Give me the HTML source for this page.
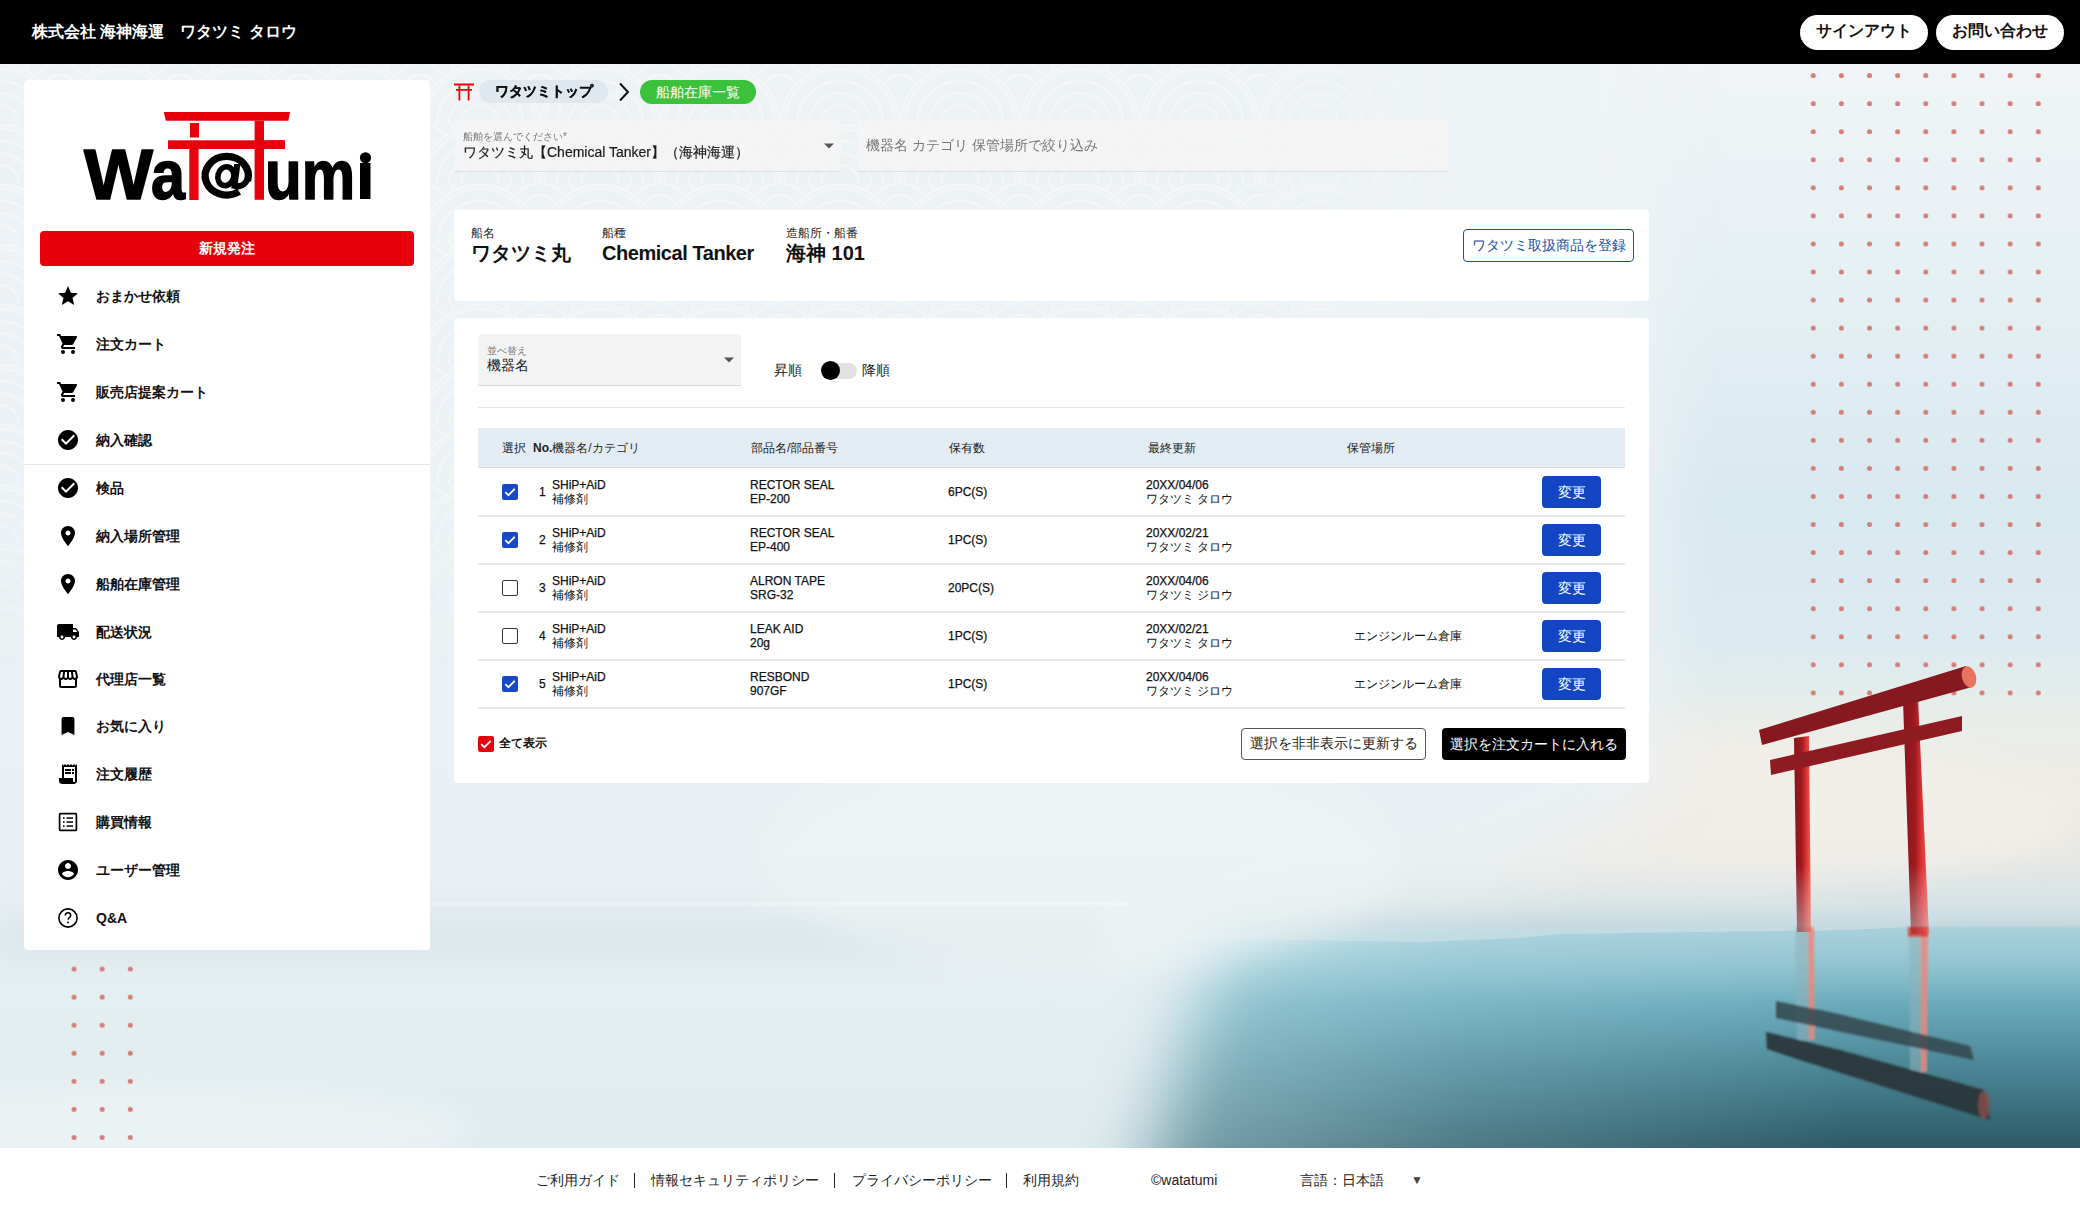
<!DOCTYPE html>
<html lang="ja"><head><meta charset="utf-8">
<style>
*{box-sizing:border-box;margin:0;padding:0}
html,body{width:2080px;height:1212px;overflow:hidden}
body{position:relative;font-family:"Liberation Sans",sans-serif;color:#111;background:#eef3f6}
.a{position:absolute;white-space:nowrap}
#bg{position:absolute;left:0;top:64px;width:2080px;height:1084px;overflow:hidden}
#hdr{position:absolute;left:0;top:0;width:2080px;height:64px;background:#000}
.pill{position:absolute;top:15px;height:35px;width:128px;background:#fff;border-radius:18px;font-weight:bold;font-size:16px;line-height:32px;text-align:center;color:#111}
.panel{position:absolute;background:#fff;border-radius:4px}
.mi{position:absolute;left:96px;font-weight:bold;font-size:14px;line-height:20px}
.ic{position:absolute;left:56px;width:24px;height:24px}
#foot{position:absolute;left:0;top:1148px;width:2080px;height:64px;background:#fff}
.ft{position:absolute;top:1171px;font-size:14px;line-height:18px;color:#222}
.sep{position:absolute;top:1173px;width:1px;height:15px;background:#222}
.cell{position:absolute;font-size:12px;line-height:14px;color:#111;-webkit-text-stroke:0.25px #111}
.chk{position:absolute;width:16px;height:16px;border-radius:2px}
.chk.on{background:#1848c8}
.chk.off{border:1.6px solid #333;background:#fff}
.btnb{position:absolute;left:1542px;width:59px;height:32px;background:#1446c4;border-radius:4px;color:#fff;font-size:14px;line-height:32px;text-align:center}
.rowline{position:absolute;left:478px;width:1147px;height:2px;background:#e8eaec}
</style></head><body>
<div id="bg"><svg width="2080" height="1084" viewBox="0 64 2080 1084" style="position:absolute;left:0;top:0">
<defs>
 <linearGradient id="sky" x1="0" y1="64" x2="0" y2="940" gradientUnits="userSpaceOnUse">
  <stop offset="0" stop-color="#f0f4f6"/>
  <stop offset="0.25" stop-color="#e6f0f4"/>
  <stop offset="0.5" stop-color="#d9e9f0"/>
  <stop offset="0.66" stop-color="#dcebf0"/>
  <stop offset="0.75" stop-color="#e9ede9"/>
  <stop offset="0.84" stop-color="#efebe5"/>
  <stop offset="0.92" stop-color="#e6e7e3"/>
  <stop offset="0.97" stop-color="#d5e1e2"/>
  <stop offset="1" stop-color="#c9dde1"/>
 </linearGradient>
 <linearGradient id="sea" x1="0" y1="915" x2="0" y2="1148" gradientUnits="userSpaceOnUse">
  <stop offset="0" stop-color="#a6d0da"/>
  <stop offset="0.2" stop-color="#86c0cf"/>
  <stop offset="0.4" stop-color="#69a8b9"/>
  <stop offset="0.65" stop-color="#4b8696"/>
  <stop offset="1" stop-color="#2c5a66"/>
 </linearGradient>
 <linearGradient id="haze" x1="0" y1="850" x2="0" y2="1000" gradientUnits="userSpaceOnUse">
  <stop offset="0" stop-color="#dfe8ea" stop-opacity="0"/>
  <stop offset="0.35" stop-color="#d6e3e6" stop-opacity="0.7"/>
  <stop offset="0.5" stop-color="#c5dadf" stop-opacity="0.95"/>
  <stop offset="0.53" stop-color="#b9d6dd" stop-opacity="0.4"/>
  <stop offset="1" stop-color="#c8dde2" stop-opacity="0"/>
 </linearGradient>
 <linearGradient id="seafade" x1="1150" y1="0" x2="1850" y2="0" gradientUnits="userSpaceOnUse">
  <stop offset="0" stop-color="#c0e2ea" stop-opacity="0.55"/>
  <stop offset="0.45" stop-color="#b0dae4" stop-opacity="0.25"/>
  <stop offset="1" stop-color="#b0dae4" stop-opacity="0"/>
 </linearGradient>
 <linearGradient id="mistc" x1="0" y1="64" x2="0" y2="1148" gradientUnits="userSpaceOnUse">
  <stop offset="0" stop-color="#eef3f6"/>
  <stop offset="0.4" stop-color="#ecf2f5"/>
  <stop offset="0.65" stop-color="#eaf1f4"/>
  <stop offset="0.85" stop-color="#e5eef1"/>
  <stop offset="1" stop-color="#e1ecef"/>
 </linearGradient>
 <filter id="bl1" x="-10%" y="-10%" width="120%" height="120%"><feGaussianBlur stdDeviation="0.8"/></filter>
 <filter id="bl2" x="-50%" y="-200%" width="200%" height="500%"><feGaussianBlur stdDeviation="14"/></filter>
 <filter id="bl" x="-20%" y="-20%" width="140%" height="140%"><feGaussianBlur stdDeviation="35"/></filter>
 <mask id="mm" maskUnits="userSpaceOnUse" x="0" y="64" width="2080" height="1084">
  <path d="M-200 -100 L1660 -100 L1660 800 L1500 880 L1230 935 L1195 1000 L1120 1250 L-200 1250 Z" fill="#fff" filter="url(#bl)"/>
 </mask>
 <pattern id="dp" x="1799.2" y="61.5" width="28.13" height="28.06" patternUnits="userSpaceOnUse"><circle cx="14.06" cy="14.03" r="2.5" fill="#d27f7c"/></pattern>
 <pattern id="dp2" x="60" y="955" width="28.13" height="28.06" patternUnits="userSpaceOnUse"><circle cx="14.06" cy="14.03" r="2.5" fill="#d27f7c"/></pattern>
 <linearGradient id="pilL" x1="0" y1="0" x2="1" y2="0">
  <stop offset="0" stop-color="#8a141b"/><stop offset="0.45" stop-color="#9c1a20"/><stop offset="0.7" stop-color="#d83033"/><stop offset="1" stop-color="#f4604f"/>
 </linearGradient>
 <linearGradient id="refl" x1="0" y1="925" x2="0" y2="1080" gradientUnits="userSpaceOnUse">
  <stop offset="0" stop-color="#d8575a" stop-opacity="0.85"/><stop offset="0.6" stop-color="#c87a7a" stop-opacity="0.5"/><stop offset="1" stop-color="#a06060" stop-opacity="0.2"/>
 </linearGradient>
 <pattern id="sg" x="0" y="64" width="120" height="60" patternUnits="userSpaceOnUse"><g stroke="#ffffff" stroke-width="3" fill="none"><circle cx="0" cy="0" r="59" fill="#eaf0f3"/><circle cx="0" cy="0" r="55"/><circle cx="0" cy="0" r="43"/><circle cx="0" cy="0" r="31"/><circle cx="0" cy="0" r="19"/><circle cx="120" cy="0" r="59" fill="#eaf0f3"/><circle cx="120" cy="0" r="55"/><circle cx="120" cy="0" r="43"/><circle cx="120" cy="0" r="31"/><circle cx="120" cy="0" r="19"/><circle cx="60" cy="30.0" r="59" fill="#eaf0f3"/><circle cx="60" cy="30.0" r="55"/><circle cx="60" cy="30.0" r="43"/><circle cx="60" cy="30.0" r="31"/><circle cx="60" cy="30.0" r="19"/><circle cx="0" cy="60" r="59" fill="#eaf0f3"/><circle cx="0" cy="60" r="55"/><circle cx="0" cy="60" r="43"/><circle cx="0" cy="60" r="31"/><circle cx="0" cy="60" r="19"/><circle cx="120" cy="60" r="59" fill="#eaf0f3"/><circle cx="120" cy="60" r="55"/><circle cx="120" cy="60" r="43"/><circle cx="120" cy="60" r="31"/><circle cx="120" cy="60" r="19"/></g></pattern>
 <linearGradient id="sgm" x1="0" y1="64" x2="0" y2="700" gradientUnits="userSpaceOnUse">
  <stop offset="0" stop-color="#fff" stop-opacity="0.3"/><stop offset="0.6" stop-color="#fff" stop-opacity="0.28"/><stop offset="1" stop-color="#fff" stop-opacity="0"/>
 </linearGradient>
 <mask id="sgmask" maskUnits="userSpaceOnUse" x="0" y="64" width="2080" height="700"><rect x="0" y="64" width="1500" height="700" fill="url(#sgm)"/></mask>
 <linearGradient id="sghg" x1="0" y1="0" x2="1500" y2="0" gradientUnits="userSpaceOnUse"><stop offset="0.8" stop-color="#fff"/><stop offset="1" stop-color="#fff" stop-opacity="0"/></linearGradient>
 <mask id="sghm" maskUnits="userSpaceOnUse" x="0" y="64" width="2080" height="700"><rect x="0" y="64" width="1500" height="700" fill="url(#sghg)"/></mask>
 <linearGradient id="pmg" x1="0" y1="640" x2="0" y2="940" gradientUnits="userSpaceOnUse"><stop offset="0.75" stop-color="#fff"/><stop offset="1" stop-color="#fff" stop-opacity="0.45"/></linearGradient>
 <mask id="pm" maskUnits="userSpaceOnUse" x="1700" y="640" width="380" height="300"><rect x="1700" y="640" width="380" height="300" fill="url(#pmg)"/></mask>
</defs>
<rect x="0" y="64" width="2080" height="1084" fill="url(#sky)"/>
<path d="M0 944 L1150 942 L1300 940 L1420 942 L1520 938 L1560 934 L1700 932 L1850 930 L1920 926 L1960 921 L2080 924 L2080 1148 L0 1148 Z" fill="url(#sea)"/>
<ellipse cx="1550" cy="820" rx="520" ry="90" fill="#f3efe9" opacity="0.75" filter="url(#bl2)"/>
<rect x="0" y="850" width="2080" height="150" fill="url(#haze)"/>
<rect x="0" y="930" width="2080" height="220" fill="url(#seafade)"/>
<rect x="0" y="64" width="2080" height="1084" fill="url(#mistc)" mask="url(#mm)"/>
<g mask="url(#sghm)"><rect x="0" y="64" width="1500" height="700" fill="url(#sg)" mask="url(#sgmask)"/></g>
<g filter="url(#bl2)">
 <rect x="0" y="915" width="1100" height="45" fill="#d5e3e7" opacity="0.6"/>
 <ellipse cx="150" cy="1130" rx="320" ry="45" fill="#ffffff" opacity="0.3"/>
 <ellipse cx="1080" cy="860" rx="320" ry="110" fill="#f3f7f8" opacity="0.4"/>
</g>
<rect x="430" y="902" width="700" height="4" fill="#ffffff" opacity="0.3" filter="url(#bl1)"/>

<rect x="1799" y="61.5" width="254" height="646" fill="url(#dp)"/>
<rect x="60" y="955" width="84" height="196" fill="url(#dp2)"/>
<!-- torii reflections -->
<g filter="url(#bl1)">
 <path d="M1795 927 L1808 927 L1809 1040 L1797 1040 Z" fill="#8fb0b6" opacity="0.55"/>
 <path d="M1808 927 L1814 927 L1815 1040 L1809 1040 Z" fill="#e88a7c" opacity="0.85"/>
 <path d="M1909 927 L1921 927 L1921 1072 L1910 1072 Z" fill="#8fb0b6" opacity="0.55"/>
 <path d="M1921 927 L1928 927 L1927 1072 L1921 1072 Z" fill="#e88a7c" opacity="0.85"/>
 <path d="M1908 927 L1928 927 L1928 937 L1908 937 Z" fill="#d8453e" opacity="0.9"/>
 <path d="M1776 1001 L1830 1012 L1970 1046 L1974 1060 L1776 1018 Z" fill="#34474d" opacity="0.85"/>
 <path d="M1766 1032 L1840 1050 L1984 1090 L1990 1120 L1800 1060 L1767 1049 Z" fill="#263338" opacity="0.92"/>
 <ellipse cx="1984" cy="1105" rx="6" ry="14" fill="#8a4e4c" opacity="0.8"/>
</g>
<!-- torii -->
<g mask="url(#pm)">
 <path d="M1794 738 L1809 736 L1811 932 L1797 932 Z" fill="url(#pilL)"/>
 <path d="M1903 700 L1918 698 L1929 934 L1911 934 Z" fill="url(#pilL)"/>
 <path d="M1770 760 L1962 716 L1962 731 L1771 775 Z" fill="#8e1b22"/>
 <path d="M1759 730 L1966 666 L1972 687 L1762 745 Z" fill="#861820"/>
 <ellipse cx="1969" cy="677" rx="7" ry="11" transform="rotate(-16 1969 677)" fill="#e8735f"/>
</g>
</svg></div>

<div id="hdr">
  <div class="a" style="left:32px;top:22px;font-size:16px;line-height:20px;font-weight:bold;color:#fff">株式会社 海神海運　ワタツミ タロウ</div>
  <div class="pill" style="left:1800px">サインアウト</div>
  <div class="pill" style="left:1936px">お問い合わせ</div>
</div>

<!-- sidebar -->
<div class="panel" style="left:24px;top:80px;width:406px;height:870px"></div>
<!-- logo -->
<svg class="a" style="left:0;top:0" width="440" height="230" viewBox="0 0 440 230">
  <g fill="#e8000d">
    <polygon points="163.8,112 290,112 288.4,120.8 165.8,120.8"/>
    <rect x="190" y="123" width="9" height="14.5"/>
    <rect x="168" y="140.3" width="115" height="8.7"/>
    <rect x="189.3" y="149" width="9.3" height="51"/>
    <rect x="254.6" y="120.8" width="9.4" height="79"/>
    <rect x="266" y="140.3" width="19" height="8.7"/>
  </g>
  <g font-family="Liberation Sans" font-weight="bold" fill="#000" stroke="#000" stroke-width="1.6" stroke-linejoin="round">
    <text x="84" y="199" font-size="70" textLength="69" lengthAdjust="spacingAndGlyphs">W</text>
    <text x="151" y="199" font-size="71" textLength="34" lengthAdjust="spacingAndGlyphs">a</text>
    <text x="265" y="199" font-size="70" textLength="90" lengthAdjust="spacingAndGlyphs">um</text>
  </g>
  <rect x="360" y="163" width="10.5" height="36" fill="#000"/>
  <circle cx="365.5" cy="157.8" r="5.6" fill="#000"/>
  <g fill="none" stroke="#000">
    <path d="M247.6 180.7 A21.6 19.25 0 1 0 239.1 191.5" stroke-width="7.3"/>
    <ellipse cx="225.8" cy="176.2" rx="7.9" ry="9.5" transform="rotate(15 225.8 176.2)" stroke-width="5.6"/>
  </g>
  <path d="M234.2 164 L240.4 164 L237.2 188.5 L231.2 188.5 Z" fill="#000"/>
  <path d="M231.5 185 Q233 190 239 189.5 Q247 188.5 251 179 L244.5 178 Q243 183 238 183 Z" fill="#000"/>
</svg>
<div class="a" style="left:40px;top:231px;width:374px;height:35px;background:#e8000d;border-radius:4px;color:#fff;font-weight:bold;font-size:14px;line-height:35px;text-align:center">新規発注</div>

<!-- menu icons -->
<svg class="ic" style="top:284px" viewBox="0 0 24 24"><path d="M12 17.27L18.18 21l-1.64-7.03L22 9.24l-7.19-.61L12 2 9.19 8.63 2 9.24l5.46 4.73L5.82 21z"/></svg>
<div class="mi" style="top:286px">おまかせ依頼</div>
<svg class="ic" style="top:332px" viewBox="0 0 24 24"><path d="M7 18c-1.1 0-1.99.9-1.99 2S5.9 22 7 22s2-.9 2-2-.9-2-2-2zM1 2v2h2l3.6 7.59-1.35 2.45c-.16.28-.25.61-.25.96 0 1.1.9 2 2 2h12v-2H7.42c-.14 0-.25-.11-.25-.25l.03-.12.9-1.63h7.45c.75 0 1.41-.41 1.75-1.03l3.58-6.49c.08-.14.12-.31.12-.48 0-.55-.45-1-1-1H5.21l-.94-2H1zm16 16c-1.1 0-1.99.9-1.99 2s.89 2 1.99 2 2-.9 2-2-.9-2-2-2z"/></svg>
<div class="mi" style="top:334px">注文カート</div>
<svg class="ic" style="top:380px" viewBox="0 0 24 24"><path d="M7 18c-1.1 0-1.99.9-1.99 2S5.9 22 7 22s2-.9 2-2-.9-2-2-2zM1 2v2h2l3.6 7.59-1.35 2.45c-.16.28-.25.61-.25.96 0 1.1.9 2 2 2h12v-2H7.42c-.14 0-.25-.11-.25-.25l.03-.12.9-1.63h7.45c.75 0 1.410-.41 1.75-1.03l3.58-6.49c.08-.14.12-.31.12-.48 0-.55-.45-1-1-1H5.21l-.94-2H1zm16 16c-1.1 0-1.99.9-1.99 2s.89 2 1.99 2 2-.9 2-2-.9-2-2-2z"/></svg>
<div class="mi" style="top:382px">販売店提案カート</div>
<svg class="ic" style="top:428px" viewBox="0 0 24 24"><path d="M12 2C6.48 2 2 6.48 2 12s4.48 10 10 10 10-4.48 10-10S17.52 2 12 2zm-2 15l-5-5 1.41-1.41L10 14.17l7.59-7.59L19 8l-9 9z"/></svg>
<div class="mi" style="top:430px">納入確認</div>
<div class="a" style="left:24px;top:464px;width:406px;height:1px;background:#e6e6e6"></div>
<svg class="ic" style="top:476px" viewBox="0 0 24 24"><path d="M12 2C6.48 2 2 6.48 2 12s4.48 10 10 10 10-4.48 10-10S17.52 2 12 2zm-2 15l-5-5 1.41-1.41L10 14.17l7.59-7.59L19 8l-9 9z"/></svg>
<div class="mi" style="top:478px">検品</div>
<svg class="ic" style="top:524px" viewBox="0 0 24 24"><path d="M12 2C8.13 2 5 5.130 5 9c0 5.25 7 13 7 13s7-7.75 7-13c0-3.87-3.13-7-7-7zm0 9.5c-1.38 0-2.5-1.12-2.5-2.5s1.12-2.5 2.5-2.5 2.5 1.12 2.5 2.5-1.12 2.5-2.5 2.5z"/></svg>
<div class="mi" style="top:526px">納入場所管理</div>
<svg class="ic" style="top:572px" viewBox="0 0 24 24"><path d="M12 2C8.13 2 5 5.130 5 9c0 5.25 7 13 7 13s7-7.75 7-13c0-3.87-3.13-7-7-7zm0 9.5c-1.38 0-2.5-1.12-2.5-2.5s1.12-2.5 2.5-2.5 2.5 1.12 2.5 2.5-1.12 2.5-2.5 2.5z"/></svg>
<div class="mi" style="top:574px">船舶在庫管理</div>
<svg class="ic" style="top:620px" viewBox="0 0 24 24"><path d="M20 8h-3V4H3c-1.1 0-2 .9-2 2v11h2c0 1.66 1.34 3 3 3s3-1.34 3-3h6c0 1.66 1.34 3 3 3s3-1.34 3-3h2v-5l-3-4zM6 18.5c-.83 0-1.5-.67-1.5-1.5s.67-1.5 1.5-1.5 1.5.67 1.5 1.5-.67 1.5-1.5 1.5zm13.5-9l1.96 2.5H17V9.5h2.5zm-1.5 9c-.83 0-1.5-.67-1.5-1.5s.67-1.5 1.5-1.5 1.5.67 1.5 1.5-.67 1.5-1.5 1.5z"/></svg>
<div class="mi" style="top:622px">配送状況</div>
<svg class="ic" style="top:667px" viewBox="0 0 24 24"><path d="M21.9 8.89l-1.05-4.37c-.22-.9-1-1.52-1.91-1.52H5.05c-.9 0-1.69.63-1.9 1.52L2.1 8.89c-.24 1.02-.02 2.06.62 2.88.08.11.19.19.28.29V19c0 1.1.9 2 2 2h14c1.1 0 2-.9 2-2v-6.94c.09-.09.2-.18.28-.28.64-.82.87-1.870.62-2.890zm-2.99-3.9l1.05 4.37c.1.42.01.84-.25 1.17-.14.18-.44.47-.94.47-.61 0-1.14-.49-1.21-1.14L16.98 5l1.93-.01zM13 5h1.96l.54 4.52c.05.39-.07.78-.33 1.07-.22.26-.54.41-.95.41-.67 0-1.22-.59-1.22-1.31V5zM8.49 9.52L9.04 5H11v4.69c0 .72-.55 1.31-1.29 1.31-.34 0-.65-.15-.89-.41-.25-.29-.37-.68-.33-1.07zm-4.45-.16L5.05 5h1.97l-.58 4.86c-.08.65-.6 1.14-1.21 1.14-.49 0-.8-.29-.93-.47-.27-.32-.36-.75-.26-1.17zM5 19v-6.03c.08.01.15.03.23.03.87 0 1.66-.36 2.24-.95.6.6 1.4.95 2.31.95.87 0 1.65-.36 2.23-.93.59.57 1.39.93 2.29.93.84 0 1.64-.35 2.24-.95.58.59 1.37.95 2.24.95.08 0 .15-.02.23-.03V19H5z"/></svg>
<div class="mi" style="top:669px">代理店一覧</div>
<svg class="ic" style="top:714px" viewBox="0 0 24 24"><path d="M17 3H7c-1.1 0-1.99.9-1.99 2L5 21l7-3 7 3V5c0-1.1-.9-2-2-2z" transform="translate(12 12) scale(0.92 1) translate(-12 -12)"/></svg>
<div class="mi" style="top:716px">お気に入り</div>
<svg class="ic" style="top:762px" viewBox="0 0 24 24"><path d="M19.5 3.5L18 2l-1.5 1.5L15 2l-1.5 1.5L12 2l-1.5 1.5L9 2 7.5 3.5 6 2v14H3v3c0 1.66 1.34 3 3 3h12c1.66 0 3-1.34 3-3V2l-1.5 1.5zM19 19c0 .55-.45 1-1 1s-1-.45-1-1v-3H8V5h11v14z"/><path d="M9 7h6v2H9zM16 7h2v2h-2zM9 10h6v2H9zM16 10h2v2h-2z"/></svg>
<div class="mi" style="top:764px">注文履歴</div>
<svg class="ic" style="top:810px" viewBox="0 0 24 24"><rect x="3.6" y="3.6" width="16.8" height="16.8" rx="1" fill="none" stroke="#000" stroke-width="1.7"/><g fill="#000"><rect x="7" y="7.2" width="1.6" height="1.6"/><rect x="7" y="11.2" width="1.6" height="1.6"/><rect x="7" y="15.2" width="1.6" height="1.6"/><rect x="10.5" y="7.3" width="6.5" height="1.5"/><rect x="10.5" y="11.3" width="6.5" height="1.5"/><rect x="10.5" y="15.3" width="6.5" height="1.5"/></g></svg>
<div class="mi" style="top:812px">購買情報</div>
<svg class="ic" style="top:858px" viewBox="0 0 24 24"><path d="M12 2C6.48 2 2 6.48 2 12s4.48 10 10 10 10-4.48 10-10S17.52 2 12 2zm0 3c1.66 0 3 1.34 3 3s-1.34 3-3 3-3-1.34-3-3 1.34-3 3-3zm0 14.2c-2.5 0-4.71-1.280-6-3.22.03-1.99 4-3.08 6-3.08 1.99 0 5.970 1.090 6 3.080-1.29 1.94-3.5 3.22-6 3.22z"/></svg>
<div class="mi" style="top:860px">ユーザー管理</div>
<svg class="ic" style="top:906px" viewBox="0 0 24 24"><circle cx="12" cy="12" r="9.1" fill="none" stroke="#000" stroke-width="1.6"/><path d="M9.3 9.6c0-1.6 1.2-2.8 2.7-2.8s2.7 1.1 2.7 2.6c0 2-2.6 2.1-2.6 4.4" fill="none" stroke="#000" stroke-width="1.5"/><rect x="11.2" y="15.6" width="1.6" height="1.7" fill="#000"/></svg>
<div class="mi" style="top:908px">Q&amp;A</div>

<!-- breadcrumb -->
<svg class="a" style="left:454px;top:83px" width="20" height="18" viewBox="0 0 20 18">
  <g fill="#e8000d"><rect x="0" y="0.5" width="20" height="2"/><rect x="2" y="6" width="16" height="1.8"/><rect x="4.5" y="2.5" width="1.8" height="15"/><rect x="13.7" y="2.5" width="1.8" height="15"/></g>
</svg>
<div class="a" style="left:479px;top:80px;width:129px;height:23px;border-radius:12px;background:#dfe8ee;font-weight:bold;font-size:14px;line-height:23px;text-align:center;-webkit-text-stroke:0.3px #111">ワタツミトップ</div>
<svg class="a" style="left:616px;top:82px" width="16" height="20" viewBox="0 0 16 20"><path d="M4 1.5 L12 10 L4 18.5" fill="none" stroke="#111" stroke-width="2"/></svg>
<div class="a" style="left:640px;top:80px;width:116px;height:24px;border-radius:12px;background:#3cc13c;color:#fff;font-size:14px;line-height:24px;text-align:center">船舶在庫一覧</div>

<!-- selects -->
<div class="a" style="left:455px;top:120px;width:386px;height:52px;background:rgba(245,245,244,0.85);border-bottom:1px solid #dedede;border-radius:4px 4px 0 0"></div>
<div class="a" style="left:463px;top:131px;font-size:10px;line-height:12px;color:#777">船舶を選んでください*</div>
<div class="a" style="left:463px;top:144px;font-size:14px;line-height:17px;color:#1a1a1a;-webkit-text-stroke:0.2px #1a1a1a">ワタツミ丸【Chemical Tanker】（海神海運）</div>
<svg class="a" style="left:824px;top:143px" width="10" height="6" viewBox="0 0 10 5"><path d="M0 0h10L5 5z" fill="#555"/></svg>
<div class="a" style="left:858px;top:120px;width:590px;height:52px;background:rgba(245,245,244,0.85);border-bottom:1px solid #dedede;border-radius:4px 4px 0 0"></div>
<div class="a" style="left:866px;top:137px;font-size:14px;line-height:17px;color:#777">機器名 カテゴリ 保管場所で絞り込み</div>

<!-- info panel -->
<div class="panel" style="left:454px;top:210px;width:1195px;height:91px"></div>
<div class="a" style="left:471px;top:226px;font-size:12px;line-height:14px;color:#222">船名</div>
<div class="a" style="left:471px;top:241px;font-size:20px;line-height:24px;font-weight:bold">ワタツミ丸</div>
<div class="a" style="left:602px;top:226px;font-size:12px;line-height:14px;color:#222">船種</div>
<div class="a" style="left:602px;top:241px;font-size:20px;line-height:24px;font-weight:bold;letter-spacing:-0.45px">Chemical Tanker</div>
<div class="a" style="left:786px;top:226px;font-size:12px;line-height:14px;color:#222">造船所・船番</div>
<div class="a" style="left:786px;top:241px;font-size:20px;line-height:24px;font-weight:bold">海神 101</div>
<div class="a" style="left:1463px;top:229px;width:171px;height:33px;border:1.5px solid #1a4fa8;border-radius:4px;color:#1a4fa8;font-size:14px;line-height:30px;text-align:center">ワタツミ取扱商品を登録</div>

<!-- table panel -->
<div class="panel" style="left:454px;top:318px;width:1195px;height:465px"></div>
<div class="a" style="left:478px;top:334px;width:263px;height:52px;background:#f3f3f3;border-bottom:1px solid #d9d9d9;border-radius:4px 4px 0 0"></div>
<div class="a" style="left:487px;top:345px;font-size:10px;line-height:12px;color:#777">並べ替え</div>
<div class="a" style="left:487px;top:357px;font-size:14px;line-height:17px;color:#222">機器名</div>
<svg class="a" style="left:724px;top:357px" width="10" height="6" viewBox="0 0 10 5"><path d="M0 0h10L5 5z" fill="#555"/></svg>
<div class="a" style="left:774px;top:362px;font-size:14px;line-height:17px;color:#222">昇順</div>
<div class="a" style="left:823px;top:363px;width:34px;height:16px;border-radius:8px;background:#e2e2e2"></div>
<div class="a" style="left:821px;top:361px;width:19px;height:19px;border-radius:50%;background:#000"></div>
<div class="a" style="left:862px;top:362px;font-size:14px;line-height:17px;color:#222">降順</div>
<div class="a" style="left:478px;top:407px;width:1147px;height:1px;background:#e6e6e6"></div>

<div class="a" style="left:478px;top:428px;width:1147px;height:40px;background:#e3ecf2;border-bottom:1px solid #d6dfe6"></div>
<div class="cell" style="left:502px;top:440px;font-size:12px;line-height:16px;color:#222;-webkit-text-stroke:0">選択</div>
<div class="cell" style="left:533px;top:440px;font-size:12px;line-height:16px;color:#222;-webkit-text-stroke:0"><b>No.</b>機器名/カテゴリ</div>
<div class="cell" style="left:751px;top:440px;font-size:12px;line-height:16px;color:#222;-webkit-text-stroke:0">部品名/部品番号</div>
<div class="cell" style="left:949px;top:440px;font-size:12px;line-height:16px;color:#222;-webkit-text-stroke:0">保有数</div>
<div class="cell" style="left:1148px;top:440px;font-size:12px;line-height:16px;color:#222;-webkit-text-stroke:0">最終更新</div>
<div class="cell" style="left:1347px;top:440px;font-size:12px;line-height:16px;color:#222;-webkit-text-stroke:0">保管場所</div>

<!-- rows -->
<div class="chk on" style="left:502px;top:484px"><svg width="16" height="16" viewBox="0 0 16 16"><path d="M3.2 8.2 L6.4 11.2 L12.8 4.8" fill="none" stroke="#fff" stroke-width="1.8"/></svg></div>
<div class="cell" style="left:539px;top:485px">1</div>
<div class="cell" style="left:552px;top:478px">SHiP+AiD<br><span style="-webkit-text-stroke:0">補修剤</span></div>
<div class="cell" style="left:750px;top:478px">RECTOR SEAL<br>EP-200</div>
<div class="cell" style="left:948px;top:485px">6PC(S)</div>
<div class="cell" style="left:1146px;top:478px">20XX/04/06<br><span style="-webkit-text-stroke:0">ワタツミ タロウ</span></div>
<div class="btnb" style="top:476px">変更</div>
<div class="rowline" style="top:515px"></div>

<div class="chk on" style="left:502px;top:532px"><svg width="16" height="16" viewBox="0 0 16 16"><path d="M3.2 8.2 L6.4 11.2 L12.8 4.8" fill="none" stroke="#fff" stroke-width="1.8"/></svg></div>
<div class="cell" style="left:539px;top:533px">2</div>
<div class="cell" style="left:552px;top:526px">SHiP+AiD<br><span style="-webkit-text-stroke:0">補修剤</span></div>
<div class="cell" style="left:750px;top:526px">RECTOR SEAL<br>EP-400</div>
<div class="cell" style="left:948px;top:533px">1PC(S)</div>
<div class="cell" style="left:1146px;top:526px">20XX/02/21<br><span style="-webkit-text-stroke:0">ワタツミ タロウ</span></div>
<div class="btnb" style="top:524px">変更</div>
<div class="rowline" style="top:563px"></div>

<div class="chk off" style="left:502px;top:580px"></div>
<div class="cell" style="left:539px;top:581px">3</div>
<div class="cell" style="left:552px;top:574px">SHiP+AiD<br><span style="-webkit-text-stroke:0">補修剤</span></div>
<div class="cell" style="left:750px;top:574px">ALRON TAPE<br>SRG-32</div>
<div class="cell" style="left:948px;top:581px">20PC(S)</div>
<div class="cell" style="left:1146px;top:574px">20XX/04/06<br><span style="-webkit-text-stroke:0">ワタツミ ジロウ</span></div>
<div class="btnb" style="top:572px">変更</div>
<div class="rowline" style="top:611px"></div>

<div class="chk off" style="left:502px;top:628px"></div>
<div class="cell" style="left:539px;top:629px">4</div>
<div class="cell" style="left:552px;top:622px">SHiP+AiD<br><span style="-webkit-text-stroke:0">補修剤</span></div>
<div class="cell" style="left:750px;top:622px">LEAK AID<br>20g</div>
<div class="cell" style="left:948px;top:629px">1PC(S)</div>
<div class="cell" style="left:1146px;top:622px">20XX/02/21<br><span style="-webkit-text-stroke:0">ワタツミ タロウ</span></div>
<div class="cell" style="left:1354px;top:629px;-webkit-text-stroke:0">エンジンルーム倉庫</div>
<div class="btnb" style="top:620px">変更</div>
<div class="rowline" style="top:659px"></div>

<div class="chk on" style="left:502px;top:676px"><svg width="16" height="16" viewBox="0 0 16 16"><path d="M3.2 8.2 L6.4 11.2 L12.8 4.8" fill="none" stroke="#fff" stroke-width="1.8"/></svg></div>
<div class="cell" style="left:539px;top:677px">5</div>
<div class="cell" style="left:552px;top:670px">SHiP+AiD<br><span style="-webkit-text-stroke:0">補修剤</span></div>
<div class="cell" style="left:750px;top:670px">RESBOND<br>907GF</div>
<div class="cell" style="left:948px;top:677px">1PC(S)</div>
<div class="cell" style="left:1146px;top:670px">20XX/04/06<br><span style="-webkit-text-stroke:0">ワタツミ ジロウ</span></div>
<div class="cell" style="left:1354px;top:677px;-webkit-text-stroke:0">エンジンルーム倉庫</div>
<div class="btnb" style="top:668px">変更</div>
<div class="rowline" style="top:707px"></div>

<div class="chk" style="left:478px;top:736px;background:#e8000d;border-radius:2px"><svg width="16" height="16" viewBox="0 0 16 16"><path d="M3.2 8.2 L6.4 11.2 L12.8 4.8" fill="none" stroke="#fff" stroke-width="1.8"/></svg></div>
<div class="a" style="left:499px;top:735px;font-size:12px;line-height:16px;font-weight:bold">全て表示</div>
<div class="a" style="left:1241px;top:728px;width:185px;height:32px;border:1.5px solid #555;border-radius:4px;font-size:14px;line-height:29px;text-align:center;color:#222">選択を非非表示に更新する</div>
<div class="a" style="left:1442px;top:728px;width:184px;height:32px;background:#000;border-radius:4px;font-size:14px;line-height:32px;text-align:center;color:#fff">選択を注文カートに入れる</div>

<!-- footer -->
<div id="foot"></div>
<div class="ft" style="left:536px">ご利用ガイド</div>
<div class="sep" style="left:634px"></div>
<div class="ft" style="left:651px">情報セキュリティポリシー</div>
<div class="sep" style="left:834px"></div>
<div class="ft" style="left:852px">プライバシーポリシー</div>
<div class="sep" style="left:1006px"></div>
<div class="ft" style="left:1023px">利用規約</div>
<div class="ft" style="left:1151px">©watatumi</div>
<div class="ft" style="left:1300px">言語：日本語</div>
<div class="a" style="left:1411px;top:1174px;font-size:12px;line-height:12px;color:#444">▼</div>
</body></html>
